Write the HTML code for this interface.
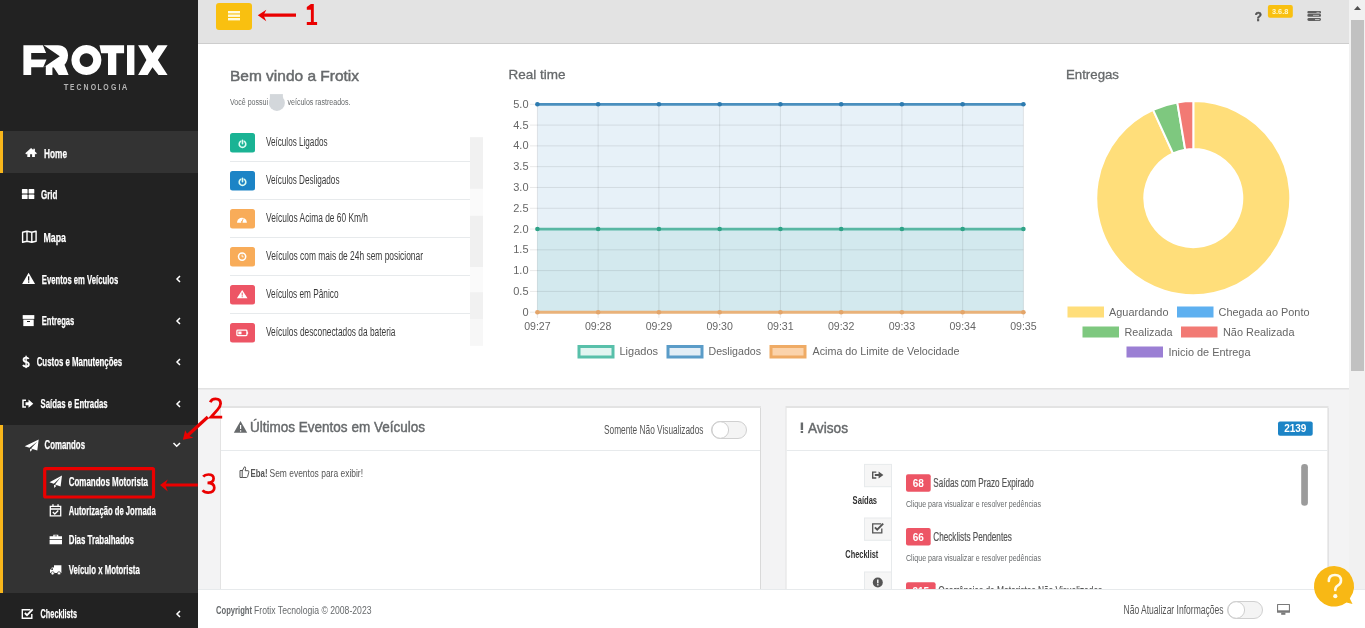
<!DOCTYPE html>
<html><head><meta charset="utf-8"><title>Frotix</title>
<style>html,body{margin:0;padding:0;overflow:hidden;background:#f3f3f4}svg{display:block;will-change:transform}text{font-family:"Liberation Sans", sans-serif}</style>
</head><body>
<svg width="1365" height="628" viewBox="0 0 1365 628">
<rect x="0" y="0" width="1365" height="628" fill="#f3f3f4" />
<rect x="198" y="0" width="1151" height="43" fill="#e3e3e3" />
<rect x="198" y="43" width="1151" height="1" fill="#cdcdcd" />
<rect x="198" y="44" width="1151" height="344" fill="#ffffff" />
<rect x="198" y="388" width="1151" height="1.5" fill="#e2e2e2" />
<rect x="216" y="3" width="36" height="27" fill="#f9c010" rx="3" />
<rect x="228" y="11" width="12" height="2.4" fill="#fffbe0" />
<rect x="228" y="14.5" width="12" height="2.4" fill="#fffbe0" />
<rect x="228" y="18" width="12" height="2.4" fill="#fffbe0" />
<text x="1254.8" y="20.8" font-size="12" fill="#555555" font-weight="700" textLength="7.2" lengthAdjust="spacingAndGlyphs" stroke="#555" stroke-width="0.5">?</text>
<rect x="1267.9" y="4.9" width="24.9" height="12.9" fill="#f9c010" rx="2" />
<text x="1272" y="13.8" font-size="7.2" fill="#fff9cc" font-weight="700" textLength="16.3" lengthAdjust="spacingAndGlyphs" >3.6.8</text>
<rect x="1307.4" y="11.1" width="13.6" height="2.4" fill="#5f5f5f" rx="1" />
<rect x="1307.4" y="14" width="13.6" height="2.7" fill="#5f5f5f" rx="1" />
<rect x="1307.4" y="18.1" width="13.6" height="2.9" fill="#5f5f5f" rx="1.4" />
<rect x="1316.5" y="11.9" width="3" height="0.8" fill="#c8c8c8" />
<rect x="1313" y="14.9" width="6" height="0.8" fill="#c8c8c8" />
<rect x="1315" y="19.2" width="4.5" height="0.9" fill="#d8d8d8" />
<text x="230" y="80.7" font-size="14.5" fill="#676a6c" textLength="129" lengthAdjust="spacingAndGlyphs" stroke="#676a6c" stroke-width="0.45">Bem vindo a Frotix</text>
<text x="230" y="105" font-size="8.5" fill="#676a6c" textLength="38" lengthAdjust="spacingAndGlyphs" >Você possui</text>
<rect x="269.9" y="94.1" width="13" height="9" fill="#d3d7db"/><circle cx="276.9" cy="102.9" r="8" fill="#d3d7db"/>
<text x="287.5" y="105" font-size="8.5" fill="#676a6c" textLength="63" lengthAdjust="spacingAndGlyphs" >veículos rastreados.</text>
<rect x="230" y="133" width="25" height="19.5" fill="#1ab394" rx="2.5" />
<text x="266" y="146" font-size="12.5" fill="#3a3a3a" textLength="61.5" lengthAdjust="spacingAndGlyphs" >Veículos Ligados</text>
<rect x="230" y="161" width="240" height="1" fill="#e7eaec" />
<rect x="230" y="171" width="25" height="19.5" fill="#1c84c6" rx="2.5" />
<text x="266" y="184" font-size="12.5" fill="#3a3a3a" textLength="73.5" lengthAdjust="spacingAndGlyphs" >Veículos Desligados</text>
<rect x="230" y="199" width="240" height="1" fill="#e7eaec" />
<rect x="230" y="209" width="25" height="19.5" fill="#f8ac59" rx="2.5" />
<text x="266" y="222" font-size="12.5" fill="#3a3a3a" textLength="102" lengthAdjust="spacingAndGlyphs" >Veículos Acima de 60 Km/h</text>
<rect x="230" y="237" width="240" height="1" fill="#e7eaec" />
<rect x="230" y="247" width="25" height="19.5" fill="#f8ac59" rx="2.5" />
<text x="266" y="260" font-size="12.5" fill="#3a3a3a" textLength="157" lengthAdjust="spacingAndGlyphs" >Veículos com mais de 24h sem posicionar</text>
<rect x="230" y="275" width="240" height="1" fill="#e7eaec" />
<rect x="230" y="285" width="25" height="19.5" fill="#ed5565" rx="2.5" />
<text x="266" y="298" font-size="12.5" fill="#3a3a3a" textLength="72.5" lengthAdjust="spacingAndGlyphs" >Veículos em Pânico</text>
<rect x="230" y="313" width="240" height="1" fill="#e7eaec" />
<rect x="230" y="323" width="25" height="19.5" fill="#ed5565" rx="2.5" />
<text x="266" y="336" font-size="12.5" fill="#3a3a3a" textLength="129.5" lengthAdjust="spacingAndGlyphs" >Veículos desconectados da bateria</text>
<rect x="470" y="137.2" width="13" height="51.70000000000002" fill="#f1f1f1" />
<rect x="470" y="188.9" width="13" height="26.799999999999983" fill="#fafafa" />
<rect x="470" y="215.7" width="13" height="51.69999999999999" fill="#f0f0f0" />
<rect x="470" y="267.4" width="13" height="24.80000000000001" fill="#fafafa" />
<rect x="470" y="292.2" width="13" height="26.80000000000001" fill="#f1f1f1" />
<rect x="470" y="319" width="13" height="26.80000000000001" fill="#f7f7f7" />
<g fill="none" stroke="#dffcf2" stroke-width="1.6" stroke-linecap="round"><path d="M240.6 141.4 A3.3 3.3 0 1 0 244.4 141.4"/><line x1="242.5" y1="140.3" x2="242.5" y2="143.8"/><path d="M240.6 179.4 A3.3 3.3 0 1 0 244.4 179.4"/><line x1="242.5" y1="178.3" x2="242.5" y2="181.8"/></g>
<path d="M237 222.7 A4.95 4.95 0 0 1 246.9 222.7 Z" fill="#fff"/><path d="M241.9 221.8 L243.3 218.6" stroke="#f8ac59" stroke-width="0.9"/><circle cx="241.9" cy="222" r="0.9" fill="#f8ac59"/>
<circle cx="242.1" cy="256.6" r="3.6" fill="none" stroke="#fff" stroke-width="1.5"/><path d="M242.1 254.6 V256.8 H243.6" fill="none" stroke="#fff" stroke-width="0.9"/>
<path d="M242.2 289.9 L247.5 298.3 H236.9 Z" fill="#fff"/><rect x="241.7" y="292.6" width="1" height="3" fill="#ed5565"/><rect x="241.7" y="296.2" width="1" height="1" fill="#ed5565"/>
<rect x="236.9" y="330.2" width="10" height="5.4" rx="0.8" fill="none" stroke="#fff" stroke-width="1.3"/><rect x="238.3" y="331.5" width="3.2" height="2.8" fill="#fff"/><rect x="247.2" y="331.8" width="0.9" height="2.2" fill="#fff"/>
<text x="508.5" y="79" font-size="13" fill="#676a6c" textLength="57" lengthAdjust="spacingAndGlyphs" stroke="#676a6c" stroke-width="0.3">Real time</text>
<rect x="537.4" y="104.3" width="486.0" height="207.89999999999998" fill="#e7f1f8" />
<rect x="537.4" y="229.04" width="486.0" height="83.16" fill="#d3e9ee" />
<line x1="530" y1="104.3" x2="1023.4" y2="104.3" stroke="rgba(0,0,0,0.09)" stroke-width="1" />
<line x1="530" y1="125.09" x2="1023.4" y2="125.09" stroke="rgba(0,0,0,0.09)" stroke-width="1" />
<line x1="530" y1="145.88" x2="1023.4" y2="145.88" stroke="rgba(0,0,0,0.09)" stroke-width="1" />
<line x1="530" y1="166.67" x2="1023.4" y2="166.67" stroke="rgba(0,0,0,0.09)" stroke-width="1" />
<line x1="530" y1="187.45999999999998" x2="1023.4" y2="187.45999999999998" stroke="rgba(0,0,0,0.09)" stroke-width="1" />
<line x1="530" y1="208.25" x2="1023.4" y2="208.25" stroke="rgba(0,0,0,0.09)" stroke-width="1" />
<line x1="530" y1="229.04" x2="1023.4" y2="229.04" stroke="rgba(0,0,0,0.09)" stroke-width="1" />
<line x1="530" y1="249.82999999999998" x2="1023.4" y2="249.82999999999998" stroke="rgba(0,0,0,0.09)" stroke-width="1" />
<line x1="530" y1="270.62" x2="1023.4" y2="270.62" stroke="rgba(0,0,0,0.09)" stroke-width="1" />
<line x1="530" y1="291.40999999999997" x2="1023.4" y2="291.40999999999997" stroke="rgba(0,0,0,0.09)" stroke-width="1" />
<line x1="530" y1="312.2" x2="1023.4" y2="312.2" stroke="rgba(0,0,0,0.09)" stroke-width="1" />
<line x1="537.4" y1="104.3" x2="537.4" y2="318" stroke="rgba(0,0,0,0.09)" stroke-width="1" />
<line x1="598.15" y1="104.3" x2="598.15" y2="318" stroke="rgba(0,0,0,0.09)" stroke-width="1" />
<line x1="658.9" y1="104.3" x2="658.9" y2="318" stroke="rgba(0,0,0,0.09)" stroke-width="1" />
<line x1="719.65" y1="104.3" x2="719.65" y2="318" stroke="rgba(0,0,0,0.09)" stroke-width="1" />
<line x1="780.4" y1="104.3" x2="780.4" y2="318" stroke="rgba(0,0,0,0.09)" stroke-width="1" />
<line x1="841.15" y1="104.3" x2="841.15" y2="318" stroke="rgba(0,0,0,0.09)" stroke-width="1" />
<line x1="901.9" y1="104.3" x2="901.9" y2="318" stroke="rgba(0,0,0,0.09)" stroke-width="1" />
<line x1="962.65" y1="104.3" x2="962.65" y2="318" stroke="rgba(0,0,0,0.09)" stroke-width="1" />
<line x1="1023.4" y1="104.3" x2="1023.4" y2="318" stroke="rgba(0,0,0,0.09)" stroke-width="1" />
<text x="528.5" y="107.8" font-size="11" fill="#666666" text-anchor="end" >5.0</text>
<text x="528.5" y="128.59" font-size="11" fill="#666666" text-anchor="end" >4.5</text>
<text x="528.5" y="149.38" font-size="11" fill="#666666" text-anchor="end" >4.0</text>
<text x="528.5" y="170.17" font-size="11" fill="#666666" text-anchor="end" >3.5</text>
<text x="528.5" y="190.95999999999998" font-size="11" fill="#666666" text-anchor="end" >3.0</text>
<text x="528.5" y="211.75" font-size="11" fill="#666666" text-anchor="end" >2.5</text>
<text x="528.5" y="232.54" font-size="11" fill="#666666" text-anchor="end" >2.0</text>
<text x="528.5" y="253.32999999999998" font-size="11" fill="#666666" text-anchor="end" >1.5</text>
<text x="528.5" y="274.12" font-size="11" fill="#666666" text-anchor="end" >1.0</text>
<text x="528.5" y="294.90999999999997" font-size="11" fill="#666666" text-anchor="end" >0.5</text>
<text x="528.5" y="315.7" font-size="11" fill="#666666" text-anchor="end" >0</text>
<text x="537.4" y="330" font-size="11" fill="#666666" textLength="26.5" lengthAdjust="spacingAndGlyphs" text-anchor="middle" >09:27</text>
<text x="598.15" y="330" font-size="11" fill="#666666" textLength="26.5" lengthAdjust="spacingAndGlyphs" text-anchor="middle" >09:28</text>
<text x="658.9" y="330" font-size="11" fill="#666666" textLength="26.5" lengthAdjust="spacingAndGlyphs" text-anchor="middle" >09:29</text>
<text x="719.65" y="330" font-size="11" fill="#666666" textLength="26.5" lengthAdjust="spacingAndGlyphs" text-anchor="middle" >09:30</text>
<text x="780.4" y="330" font-size="11" fill="#666666" textLength="26.5" lengthAdjust="spacingAndGlyphs" text-anchor="middle" >09:31</text>
<text x="841.15" y="330" font-size="11" fill="#666666" textLength="26.5" lengthAdjust="spacingAndGlyphs" text-anchor="middle" >09:32</text>
<text x="901.9" y="330" font-size="11" fill="#666666" textLength="26.5" lengthAdjust="spacingAndGlyphs" text-anchor="middle" >09:33</text>
<text x="962.65" y="330" font-size="11" fill="#666666" textLength="26.5" lengthAdjust="spacingAndGlyphs" text-anchor="middle" >09:34</text>
<text x="1023.4" y="330" font-size="11" fill="#666666" textLength="26.5" lengthAdjust="spacingAndGlyphs" text-anchor="middle" >09:35</text>
<line x1="537.4" y1="104.3" x2="1023.4" y2="104.3" stroke="#4a8fbe" stroke-width="2.8" />
<line x1="537.4" y1="229.04" x2="1023.4" y2="229.04" stroke="#58b7a3" stroke-width="2.8" />
<line x1="537.4" y1="312.2" x2="1023.4" y2="312.2" stroke="#e9b27a" stroke-width="3" />
<circle cx="537.4" cy="104.3" r="2.3" fill="#2d7bb0"/>
<circle cx="537.4" cy="229.04" r="2.3" fill="#2fa287"/>
<circle cx="537.4" cy="312.2" r="2.3" fill="#e3a56a"/>
<circle cx="598.15" cy="104.3" r="2.3" fill="#2d7bb0"/>
<circle cx="598.15" cy="229.04" r="2.3" fill="#2fa287"/>
<circle cx="598.15" cy="312.2" r="2.3" fill="#e3a56a"/>
<circle cx="658.9" cy="104.3" r="2.3" fill="#2d7bb0"/>
<circle cx="658.9" cy="229.04" r="2.3" fill="#2fa287"/>
<circle cx="658.9" cy="312.2" r="2.3" fill="#e3a56a"/>
<circle cx="719.65" cy="104.3" r="2.3" fill="#2d7bb0"/>
<circle cx="719.65" cy="229.04" r="2.3" fill="#2fa287"/>
<circle cx="719.65" cy="312.2" r="2.3" fill="#e3a56a"/>
<circle cx="780.4" cy="104.3" r="2.3" fill="#2d7bb0"/>
<circle cx="780.4" cy="229.04" r="2.3" fill="#2fa287"/>
<circle cx="780.4" cy="312.2" r="2.3" fill="#e3a56a"/>
<circle cx="841.15" cy="104.3" r="2.3" fill="#2d7bb0"/>
<circle cx="841.15" cy="229.04" r="2.3" fill="#2fa287"/>
<circle cx="841.15" cy="312.2" r="2.3" fill="#e3a56a"/>
<circle cx="901.9" cy="104.3" r="2.3" fill="#2d7bb0"/>
<circle cx="901.9" cy="229.04" r="2.3" fill="#2fa287"/>
<circle cx="901.9" cy="312.2" r="2.3" fill="#e3a56a"/>
<circle cx="962.65" cy="104.3" r="2.3" fill="#2d7bb0"/>
<circle cx="962.65" cy="229.04" r="2.3" fill="#2fa287"/>
<circle cx="962.65" cy="312.2" r="2.3" fill="#e3a56a"/>
<circle cx="1023.4" cy="104.3" r="2.3" fill="#2d7bb0"/>
<circle cx="1023.4" cy="229.04" r="2.3" fill="#2fa287"/>
<circle cx="1023.4" cy="312.2" r="2.3" fill="#e3a56a"/>
<rect x="579.0" y="346.5" width="34" height="10.5" fill="#e2f5f1" stroke="#58c0aa" stroke-width="3"/>
<text x="619.5" y="355" font-size="11" fill="#666666" textLength="38.5" lengthAdjust="spacingAndGlyphs" >Ligados</text>
<rect x="668.0" y="346.5" width="34" height="10.5" fill="#e3eef6" stroke="#5a9cc8" stroke-width="3"/>
<text x="708.5" y="355" font-size="11" fill="#666666" textLength="52.5" lengthAdjust="spacingAndGlyphs" >Desligados</text>
<rect x="771.0" y="346.5" width="34" height="10.5" fill="#fbd3ab" stroke="#efab65" stroke-width="3"/>
<text x="812.5" y="355" font-size="11" fill="#666666" textLength="147" lengthAdjust="spacingAndGlyphs" >Acima do Limite de Velocidade</text>
<text x="1066" y="79" font-size="13" fill="#676a6c" textLength="53" lengthAdjust="spacingAndGlyphs" stroke="#676a6c" stroke-width="0.3">Entregas</text>
<path d="M1193.30 101.10 A97 97 0 1 1 1153.07 109.83 L1172.98 153.51 A49 49 0 1 0 1193.30 149.10 Z" fill="#ffde7a" stroke="#fff" stroke-width="2"/>
<path d="M1153.07 109.83 A97 97 0 0 1 1177.29 102.43 L1185.21 149.77 A49 49 0 0 0 1172.98 153.51 Z" fill="#7ec87f" stroke="#fff" stroke-width="2"/>
<path d="M1177.29 102.43 A97 97 0 0 1 1193.30 101.10 L1193.30 149.10 A49 49 0 0 0 1185.21 149.77 Z" fill="#f27a74" stroke="#fff" stroke-width="2"/>
<rect x="1067.5" y="306.5" width="36.5" height="11" fill="#ffde7a" />
<text x="1109" y="316" font-size="11" fill="#666666" textLength="59.5" lengthAdjust="spacingAndGlyphs" >Aguardando</text>
<rect x="1177" y="306.5" width="36.5" height="11" fill="#5eb0f0" />
<text x="1218.5" y="316" font-size="11" fill="#666666" textLength="91" lengthAdjust="spacingAndGlyphs" >Chegada ao Ponto</text>
<rect x="1082.5" y="326.5" width="36.5" height="11" fill="#7ec87f" />
<text x="1124.5" y="336" font-size="11" fill="#666666" textLength="48" lengthAdjust="spacingAndGlyphs" >Realizada</text>
<rect x="1181" y="326.5" width="36.5" height="11" fill="#f27a74" />
<text x="1223" y="336" font-size="11" fill="#666666" textLength="71.5" lengthAdjust="spacingAndGlyphs" >Não Realizada</text>
<rect x="1126.5" y="346.5" width="36.5" height="11" fill="#9b7fd4" />
<text x="1168.5" y="356" font-size="11" fill="#666666" textLength="82" lengthAdjust="spacingAndGlyphs" >Inicio de Entrega</text>
<rect x="220" y="406" width="541" height="202" fill="#e3e3e3" />
<rect x="221" y="408" width="540" height="200" fill="#d9d9d9" />
<rect x="221" y="408" width="539" height="200" fill="#ffffff" />
<rect x="785.5" y="406" width="543" height="202" fill="#e3e3e3" />
<rect x="786.5" y="408" width="542" height="200" fill="#d9d9d9" />
<rect x="786.5" y="408" width="541" height="200" fill="#ffffff" />
<rect x="221" y="450" width="539" height="1" fill="#e7eaec" />
<rect x="786.5" y="450" width="541" height="1" fill="#e7eaec" />
<path d="M240.5 421 L247.2 432.8 L233.8 432.8 Z" fill="#676a6c"/><rect x="240" y="425" width="1.2" height="4" fill="#fff"/><rect x="240" y="430.3" width="1.2" height="1.3" fill="#fff"/>
<text x="250" y="432" font-size="14.5" fill="#676a6c" textLength="175" lengthAdjust="spacingAndGlyphs" stroke="#676a6c" stroke-width="0.45">Últimos Eventos em Veículos</text>
<text x="604" y="434" font-size="12" fill="#555555" textLength="99.5" lengthAdjust="spacingAndGlyphs" >Somente Não Visualizados</text>
<rect x="711.5" y="421.5" width="35" height="17" rx="8.5" fill="#f4f4f4" stroke="#d0d0d0" stroke-width="1"/>
<circle cx="720.3" cy="430" r="8.3" fill="#fff" stroke="#cfcfcf" stroke-width="1"/>
<text x="250.5" y="477" font-size="11.5" fill="#555555" font-weight="700" textLength="17" lengthAdjust="spacingAndGlyphs" >Eba!</text>
<text x="269.5" y="477" font-size="11.5" fill="#555555" textLength="93.5" lengthAdjust="spacingAndGlyphs" >Sem eventos para exibir!</text>
<path d="M240 470.5 h2.2 v7 h-2.2 z M242.2 471 l2.3-4.2 q1.3 0 1.1 1.6 l-0.4 2.3 h3 q1 0.3 0.6 1.5 l-1.2 4.5 q-0.3 0.8 -1.2 0.8 h-4.2" fill="none" stroke="#555" stroke-width="1"/>
<rect x="800.7" y="422.5" width="2.4" height="7.5" fill="#676a6c" />
<rect x="800.7" y="431" width="2.4" height="2" fill="#676a6c" />
<text x="808" y="432.5" font-size="14.5" fill="#676a6c" textLength="40" lengthAdjust="spacingAndGlyphs" stroke="#676a6c" stroke-width="0.45">Avisos</text>
<rect x="1278" y="421.4" width="34.7" height="14.4" fill="#1c84c6" rx="2" />
<text x="1295.3" y="432.4" font-size="10" fill="#ffffff" font-weight="700" text-anchor="middle" >2139</text>
<rect x="891" y="464" width="1" height="130" fill="#e7eaec" />
<rect x="864.5" y="464.4" width="27" height="22.3" fill="#f6f6f6" stroke="#e7eaec" stroke-width="1"/>
<text x="852.6" y="504.4" font-size="11.5" fill="#333333" font-weight="700" textLength="24.5" lengthAdjust="spacingAndGlyphs" >Saídas</text>
<rect x="864.5" y="518" width="27" height="22.3" fill="#f6f6f6" stroke="#e7eaec" stroke-width="1"/>
<text x="845.3" y="558" font-size="11.5" fill="#333333" font-weight="700" textLength="33" lengthAdjust="spacingAndGlyphs" >Checklist</text>
<rect x="864.5" y="572" width="27" height="22.3" fill="#f6f6f6" stroke="#e7eaec" stroke-width="1"/>
<path d="M876.3 472.1 H872.7 V478 H876.3" fill="none" stroke="#555" stroke-width="1.4"/><path d="M874.8 473.9 H878.6 V471.4 L883.4 475 L878.6 478.6 V476.1 H874.8 Z" fill="#555"/>
<path d="M881.2 523.8 H872.7 V532.9 H881.8 V528.5" fill="none" stroke="#555" stroke-width="1.3"/><path d="M874.9 527.3 L877.2 529.6 L883.2 523.6" fill="none" stroke="#555" stroke-width="1.9"/>
<circle cx="877.8" cy="582.5" r="5" fill="#555"/><rect x="877.1" y="579.5" width="1.4" height="3.8" fill="#fff"/><rect x="877.1" y="584.2" width="1.4" height="1.3" fill="#fff"/>
<rect x="906" y="474.2" width="24.7" height="17.5" fill="#ed5565" rx="2" />
<text x="918.35" y="486.7" font-size="10" fill="#ffffff" font-weight="700" text-anchor="middle" >68</text>
<text x="933.3000000000001" y="486.7" font-size="12.5" fill="#555555" textLength="100.5" lengthAdjust="spacingAndGlyphs" stroke="#555" stroke-width="0.2">Saídas com Prazo Expirado</text>
<text x="906" y="507.2" font-size="9" fill="#676a6c" textLength="135" lengthAdjust="spacingAndGlyphs" >Clique para visualizar e resolver pedências</text>
<rect x="906" y="528" width="24.7" height="17.5" fill="#ed5565" rx="2" />
<text x="918.35" y="540.5" font-size="10" fill="#ffffff" font-weight="700" text-anchor="middle" >66</text>
<text x="933.3000000000001" y="540.5" font-size="12.5" fill="#555555" textLength="78.5" lengthAdjust="spacingAndGlyphs" stroke="#555" stroke-width="0.2">Checklists Pendentes</text>
<text x="906" y="561" font-size="9" fill="#676a6c" textLength="135" lengthAdjust="spacingAndGlyphs" >Clique para visualizar e resolver pedências</text>
<rect x="906" y="582.2" width="29.6" height="17.5" fill="#ed5565" rx="2" />
<text x="920.8" y="594.7" font-size="10" fill="#ffffff" font-weight="700" text-anchor="middle" >215</text>
<text x="938.2" y="594.7" font-size="12.5" fill="#555555" textLength="164" lengthAdjust="spacingAndGlyphs" stroke="#555" stroke-width="0.2">Ocorrências de Motoristas Não Visualizadas</text>
<rect x="1301.2" y="464" width="6.7" height="41.7" fill="#9b9b9b" rx="3.3" />
<rect x="1349" y="0" width="16" height="628" fill="#f1f1f1" />
<rect x="1351" y="20" width="13" height="351" fill="#c1c1c1" />
<path d="M1354 10 L1357.5 6 L1361 10 Z" fill="#505050"/>
<rect x="198" y="589" width="1167" height="39" fill="#ffffff" />
<rect x="198" y="589" width="1167" height="1" fill="#e7eaec" />
<text x="216" y="614" font-size="11.5" fill="#676a6c" font-weight="700" textLength="36" lengthAdjust="spacingAndGlyphs" >Copyright</text>
<text x="254" y="614" font-size="11.5" fill="#676a6c" textLength="117.5" lengthAdjust="spacingAndGlyphs" >Frotix Tecnologia © 2008-2023</text>
<text x="1123.5" y="614" font-size="12" fill="#555555" textLength="100" lengthAdjust="spacingAndGlyphs" >Não Atualizar Informações</text>
<rect x="1227.5" y="601.5" width="35" height="17" rx="8.5" fill="#f4f4f4" stroke="#d0d0d0" stroke-width="1"/>
<circle cx="1236.3" cy="610" r="8.3" fill="#fff" stroke="#cfcfcf" stroke-width="1"/>
<rect x="1277" y="604" width="13" height="8.7" fill="#7a7a7a" rx="0.5" />
<rect x="1278.1" y="605" width="10.8" height="5.3" fill="#ffffff" />
<rect x="1281.2" y="612.5" width="4.2" height="2.3" fill="#7a7a7a" />
<path d="M1334.3 566 A20.3 20.3 0 1 0 1346.5 602.5 L1352.5 604 L1349.8 598.5 A20.3 20.3 0 0 0 1334.3 566 Z" fill="#f8b815"/>
<path d="M1328.8 581 q0-6 6.2-6 q6 0 6 5.6 q0 3.3-3.3 5 q-2.4 1.2-2.4 4.4" fill="none" stroke="#fffbe8" stroke-width="2.6" stroke-linecap="round"/><circle cx="1335.3" cy="596.2" r="2.1" fill="#fffbe8"/>
<rect x="0" y="0" width="198" height="628" fill="#222222" />
<rect x="0" y="131" width="198" height="42" fill="#333333" />
<rect x="0" y="131" width="3" height="42" fill="#f8b61b" />
<rect x="0" y="425" width="198" height="168" fill="#333333" />
<rect x="0" y="425" width="3" height="168" fill="#f8b61b" />
<path fill="#ffffff" d="M23.4 45.2 H58 C64.5 45.2 68 49.5 68 55.2 C68 59.5 66.5 62.5 64.5 64.8 L68.6 75 H58.7 L53.8 67.5 H52.4 V75 H45.8 V67.2 H31.2 V75 H23.4 Z"/>
<path fill="#222222" d="M31.2 52.9 H46.1 L42.6 44.5 L59.8 56.3 L43 67.8 L46.5 59.5 H31.2 Z"/>
<path fill="#222222" d="M43 67.8 L45.8 65.9 V67.8 Z"/>
<path fill="#ffffff" fill-rule="evenodd" d="M86.4 45.1 A15 15 0 1 1 86.39 45.1 Z M86.4 53.3 A6.8 6.8 0 1 0 86.41 53.3 Z"/>
<path fill="#ffffff" d="M99.5 45.2 H124.1 V53.2 H116.3 V75 H108 V53.2 H101.2 Z"/>
<rect x="127" y="45.2" width="7.4" height="29.8" fill="#ffffff" />
<path fill="#ffffff" d="M138.1 45.2 H147.6 L152.5 52.9 L157.6 45.2 H167.6 L157.9 60.1 L167.6 75 H158.5 L152.5 67.2 L147.6 75 H138.1 L146.4 60.1 Z"/>
<text x="66.1" y="90.1" font-size="8.8" fill="#b4b4b4" font-weight="700" textLength="4.6" lengthAdjust="spacingAndGlyphs" text-anchor="middle" >T</text>
<text x="72.3" y="90.1" font-size="8.8" fill="#b4b4b4" font-weight="700" textLength="4.4" lengthAdjust="spacingAndGlyphs" text-anchor="middle" >E</text>
<text x="79" y="90.1" font-size="8.8" fill="#b4b4b4" font-weight="700" textLength="5" lengthAdjust="spacingAndGlyphs" text-anchor="middle" >C</text>
<text x="86.1" y="90.1" font-size="8.8" fill="#b4b4b4" font-weight="700" textLength="5" lengthAdjust="spacingAndGlyphs" text-anchor="middle" >N</text>
<text x="93.4" y="90.1" font-size="8.8" fill="#b4b4b4" font-weight="700" textLength="5.4" lengthAdjust="spacingAndGlyphs" text-anchor="middle" >O</text>
<text x="99.5" y="90.1" font-size="8.8" fill="#b4b4b4" font-weight="700" textLength="4.2" lengthAdjust="spacingAndGlyphs" text-anchor="middle" >L</text>
<text x="106" y="90.1" font-size="8.8" fill="#b4b4b4" font-weight="700" textLength="5.4" lengthAdjust="spacingAndGlyphs" text-anchor="middle" >O</text>
<text x="113.6" y="90.1" font-size="8.8" fill="#b4b4b4" font-weight="700" textLength="5.4" lengthAdjust="spacingAndGlyphs" text-anchor="middle" >G</text>
<text x="119.5" y="90.1" font-size="8.8" fill="#b4b4b4" font-weight="700" textLength="1.9" lengthAdjust="spacingAndGlyphs" text-anchor="middle" >I</text>
<text x="124.5" y="90.1" font-size="8.8" fill="#b4b4b4" font-weight="700" textLength="5.6" lengthAdjust="spacingAndGlyphs" text-anchor="middle" >A</text>
<path fill="#fff" d="M31.1 148.1 L25.3 153.3 L26.3 154.4 L27.3 153.5 V157.1 H30.1 V154.3 H32.1 V157.1 H34.9 V153.5 L35.9 154.4 L36.9 153.3 L34.9 151.5 V148.8 H33.3 V150.1 Z"/>
<rect x="21.9" y="189.1" width="5.7" height="4.4" fill="#ffffff" rx="0.6" />
<rect x="28.6" y="189.1" width="5.7" height="4.4" fill="#ffffff" rx="0.6" />
<rect x="21.9" y="194.6" width="5.7" height="4.4" fill="#ffffff" rx="0.6" />
<rect x="28.6" y="194.6" width="5.7" height="4.4" fill="#ffffff" rx="0.6" />
<path fill="none" stroke="#fff" stroke-width="1.4" stroke-linejoin="round" d="M22.6 232.3 L27 231.2 L31.8 232.3 L36.1 231.2 V241.2 L31.8 242.3 L27 241.2 L22.6 242.3 Z M27 231.2 V241.2 M31.8 232.3 V242.3"/>
<path fill="#fff" d="M28.6 272.7 L35.1 284 H22.1 Z"/><rect x="28" y="276.3" width="1.3" height="4.3" fill="#222"/><rect x="28" y="281.4" width="1.3" height="1.3" fill="#222"/>
<rect x="22.7" y="315.1" width="11.6" height="3.8" fill="#ffffff" />
<rect x="23.3" y="319.6" width="10.4" height="6.5" fill="#ffffff" />
<rect x="27" y="321" width="3" height="1" fill="#222" />
<path d="M28.6 359 Q28 357.6 26 357.6 Q23.6 357.6 23.6 359.7 Q23.6 361.4 26.1 361.9 Q28.8 362.4 28.8 364.5 Q28.8 366.5 26 366.5 Q23.8 366.5 23 365" fill="none" stroke="#fff" stroke-width="1.9"/><rect x="25.4" y="355.7" width="1.4" height="12.4" fill="#fff"/>
<path fill="none" stroke="#fff" stroke-width="1.5" d="M26 400.3 H23 V407.1 H26"/><path fill="#fff" d="M25.5 402.2 H28.5 V399.6 L33.3 403.7 L28.5 407.8 V405.2 H25.5 Z"/>
<path fill="#fff" d="M38.7 439.6 L24.7 446.2 L29.5 447.7 L37.2 441.8 L31 448.5 L37.3 450.5 Z M30 448.7 L30.2 451.7 L32.5 449.6 Z"/>
<path fill="none" stroke="#fff" stroke-width="1.4" d="M30.5 609.7 H22.3 V618.2 H31.8 V614"/><path fill="none" stroke="#fff" stroke-width="1.8" d="M24.8 613 L27 615.2 L32.7 609.3"/>
<path fill="#fff" d="M62 475.4 L49.5 482.3 L53.8 483.8 L60.5 477.6 L55 484.6 L60.6 486.6 Z M54 484.8 L54.2 488.1 L56.5 485.8 Z"/>
<path fill="none" stroke="#fff" stroke-width="1.3" d="M50.3 506.3 H60.7 V515.9 H50.3 Z M50.3 509 H60.7"/><rect x="52.3" y="504.2" width="1.3" height="2.8" fill="#fff"/><rect x="57.4" y="504.2" width="1.3" height="2.8" fill="#fff"/><path fill="none" stroke="#fff" stroke-width="1.3" d="M52.8 512 L54.8 514 L58.3 510.5"/>
<path fill="#fff" d="M53.3 534.7 H58.3 V536.3 H62 V539.2 H49.6 V536.3 H53.3 Z M54.5 535.6 V536.3 H57.1 V535.6 Z M49.6 540 H62 V544.3 H49.6 Z"/>
<path fill="#fff" d="M54 565.3 H61.4 V573 H50 V570 L51.9 567.5 H54 Z"/><rect x="51.3" y="568.3" width="1.6" height="1.7" fill="#333"/><circle cx="52.6" cy="573.3" r="1.6" fill="#fff" stroke="#333" stroke-width="0.7"/><circle cx="59" cy="573.3" r="1.6" fill="#fff" stroke="#333" stroke-width="0.7"/>
<text x="44" y="157.6" font-size="13.5" fill="#ffffff" font-weight="700" textLength="23" lengthAdjust="spacingAndGlyphs" stroke="#fff" stroke-width="0.25">Home</text>
<text x="41" y="199" font-size="13.5" fill="#ffffff" font-weight="700" textLength="16.5" lengthAdjust="spacingAndGlyphs" stroke="#fff" stroke-width="0.25">Grid</text>
<text x="43.5" y="241.5" font-size="13.5" fill="#ffffff" font-weight="700" textLength="22.5" lengthAdjust="spacingAndGlyphs" stroke="#fff" stroke-width="0.25">Mapa</text>
<text x="41.8" y="283.5" font-size="13.5" fill="#ffffff" font-weight="700" textLength="76.5" lengthAdjust="spacingAndGlyphs" stroke="#fff" stroke-width="0.25">Eventos em Veículos</text>
<text x="41.8" y="325" font-size="13.5" fill="#ffffff" font-weight="700" textLength="32.5" lengthAdjust="spacingAndGlyphs" stroke="#fff" stroke-width="0.25">Entregas</text>
<text x="36.7" y="366" font-size="13.5" fill="#ffffff" font-weight="700" textLength="85.5" lengthAdjust="spacingAndGlyphs" stroke="#fff" stroke-width="0.25">Custos e Manutenções</text>
<text x="40.6" y="408" font-size="13.5" fill="#ffffff" font-weight="700" textLength="67" lengthAdjust="spacingAndGlyphs" stroke="#fff" stroke-width="0.25">Saídas e Entradas</text>
<text x="44.5" y="449" font-size="13.5" fill="#ffffff" font-weight="700" textLength="40.5" lengthAdjust="spacingAndGlyphs" stroke="#fff" stroke-width="0.25">Comandos</text>
<text x="40.6" y="618" font-size="13.5" fill="#ffffff" font-weight="700" textLength="36.5" lengthAdjust="spacingAndGlyphs" stroke="#fff" stroke-width="0.25">Checklists</text>
<text x="68.7" y="486" font-size="12.5" fill="#ffffff" font-weight="700" textLength="79.3" lengthAdjust="spacingAndGlyphs" stroke="#fff" stroke-width="0.25">Comandos Motorista</text>
<text x="68.7" y="515" font-size="12.5" fill="#ffffff" font-weight="700" textLength="87" lengthAdjust="spacingAndGlyphs" stroke="#fff" stroke-width="0.25">Autorização de Jornada</text>
<text x="68.7" y="544.3" font-size="12.5" fill="#ffffff" font-weight="700" textLength="65.3" lengthAdjust="spacingAndGlyphs" stroke="#fff" stroke-width="0.25">Dias Trabalhados</text>
<text x="68.7" y="573.9" font-size="12.5" fill="#ffffff" font-weight="700" textLength="71.1" lengthAdjust="spacingAndGlyphs" stroke="#fff" stroke-width="0.25">Veículo x Motorista</text>
<path d="M180 276 L177 279 L180 282" fill="none" stroke="#fff" stroke-width="1.5"/>
<path d="M180 318 L177 321 L180 324" fill="none" stroke="#fff" stroke-width="1.5"/>
<path d="M180 359 L177 362 L180 365" fill="none" stroke="#fff" stroke-width="1.5"/>
<path d="M180 401 L177 404 L180 407" fill="none" stroke="#fff" stroke-width="1.5"/>
<path d="M180 611 L177 614 L180 617" fill="none" stroke="#fff" stroke-width="1.5"/>
<path d="M173.5 443 L176.7 446.3 L180 443" fill="none" stroke="#fff" stroke-width="1.5"/>
<line x1="263" y1="15.2" x2="296" y2="15.2" stroke="#ea0000" stroke-width="3.2"/><path d="M257.8 15.2 L266.3 9.8 L263.5 15.2 L266.3 21.2 Z" fill="#ea0000"/>
<path d="M306.8 6.9 L310.9 4.1 H313.8 V22 H317.1 V24.9 H306.8 V22 H310.9 V9.7 H306.8 Z" fill="#ea0000"/>
<path d="M210.3 402.2 Q211.5 398.8 215.6 398.8 Q220.6 398.8 220.6 403.6 Q220.6 406.3 217.6 409.6 L210.9 417.2 H222.2" fill="none" stroke="#ea0000" stroke-width="2.8" stroke-linejoin="miter"/>
<path d="M203.2 476.6 Q204.8 474.5 208.3 474.5 Q213.6 474.5 213.6 478.5 Q213.6 482.8 207.5 482.8 Q214.3 482.8 214.3 487.8 Q214.3 492.6 208.2 492.6 Q204.3 492.6 202.6 490.3" fill="none" stroke="#ea0000" stroke-width="2.7"/>
<line x1="207.8" y1="417" x2="187" y2="436" stroke="#ea0000" stroke-width="3.2"/><path d="M182.9 439.7 L185.2 430.3 L187.8 435.2 L193.3 437.8 Z" fill="#ea0000"/>
<line x1="165" y1="485" x2="197.8" y2="485" stroke="#ea0000" stroke-width="3"/><path d="M160 485 L167.8 479.6 L165.2 485 L167.8 491.6 Z" fill="#ea0000"/>
<rect x="44.7" y="468.7" width="108.8" height="28.3" rx="1" fill="none" stroke="#ea0000" stroke-width="3.2"/>
</svg>
</body></html>
